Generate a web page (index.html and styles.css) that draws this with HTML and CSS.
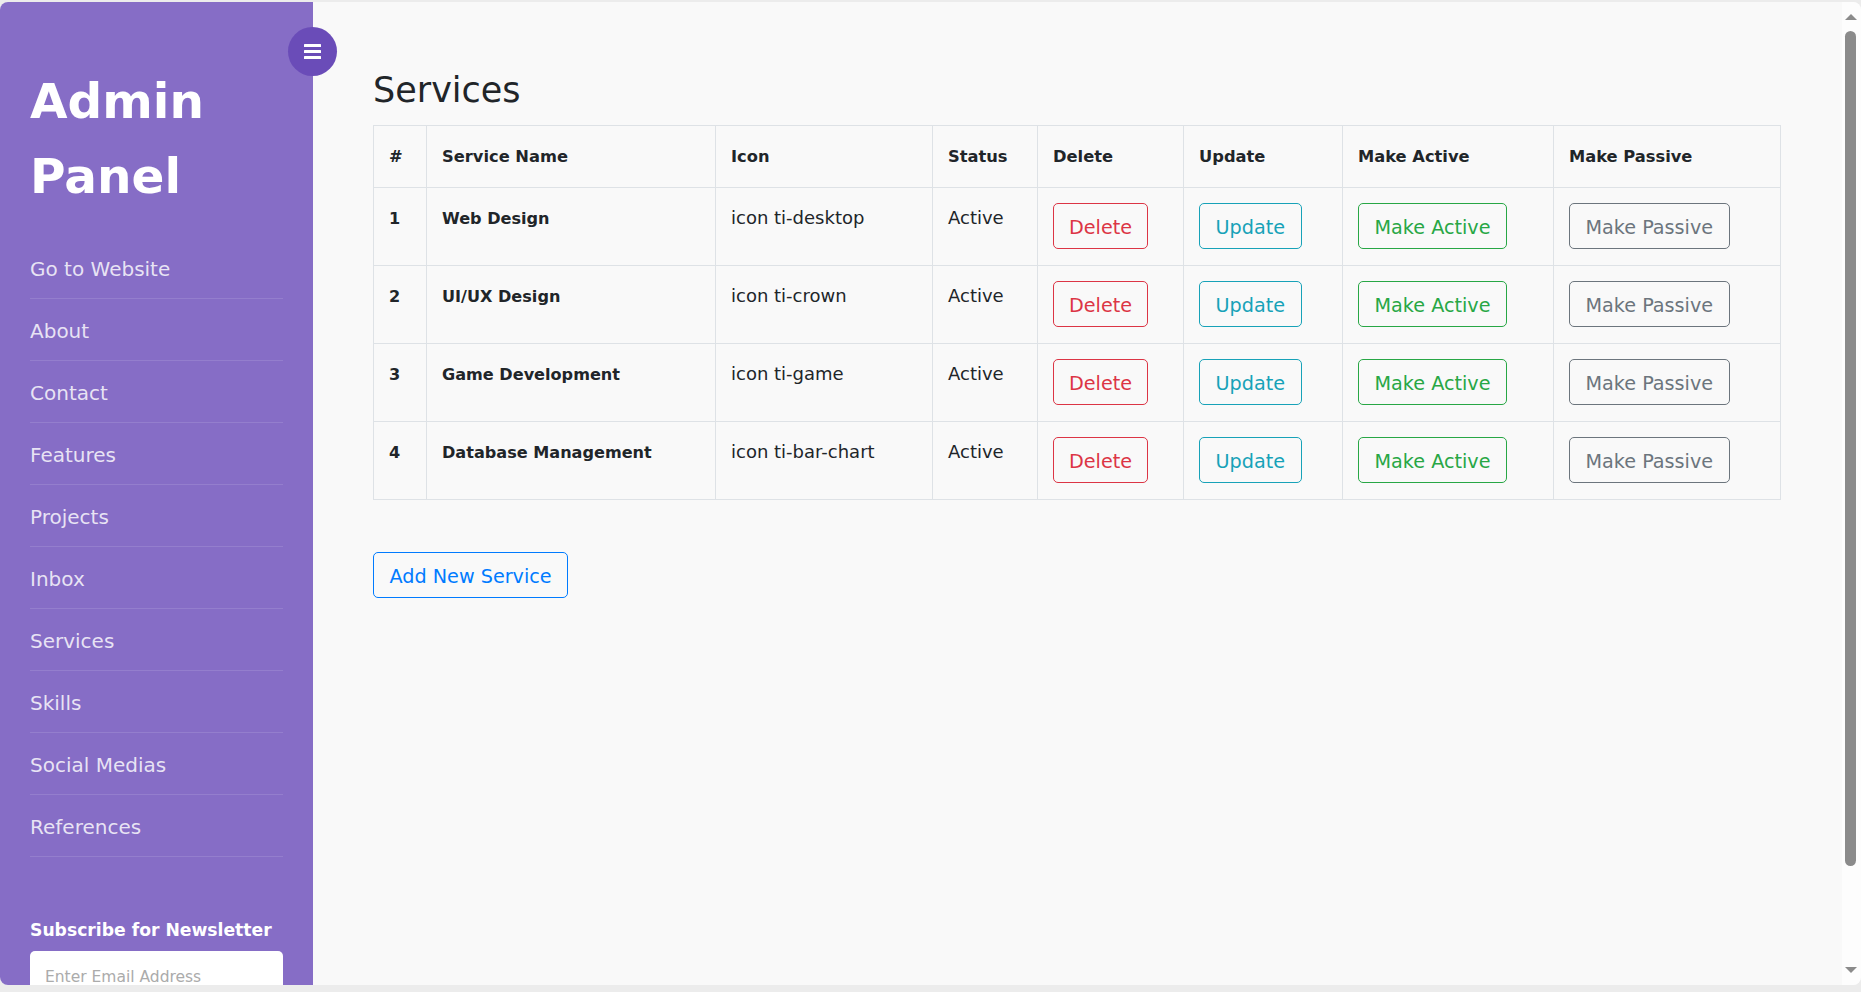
FILE: index.html
```html
<!DOCTYPE html>
<html lang="en">
<head>
<meta charset="utf-8">
<title>Admin Panel - Services</title>
<link rel="stylesheet" href="styles.css">
</head>
<body>
<div class="frame">
  <aside class="sidebar">
    <h1 class="brand">Admin Panel</h1>
    <nav class="nav">
      <a href="#">Go to Website</a>
      <a href="#">About</a>
      <a href="#">Contact</a>
      <a href="#">Features</a>
      <a href="#">Projects</a>
      <a href="#">Inbox</a>
      <a href="#">Services</a>
      <a href="#">Skills</a>
      <a href="#">Social Medias</a>
      <a href="#">References</a>
    </nav>
    <div class="newsletter">
      <h3>Subscribe for Newsletter</h3>
      <input type="email" placeholder="Enter Email Address">
    </div>
  </aside>

  <button class="toggle" type="button" aria-label="Toggle menu">
    <svg width="17" height="15" viewBox="0 0 17 15"><rect x="0" y="0" width="17" height="3" rx="0.5" fill="#fff"/><rect x="0" y="6" width="17" height="3" rx="0.5" fill="#fff"/><rect x="0" y="12" width="17" height="3" rx="0.5" fill="#fff"/></svg>
  </button>

  <main class="content">
    <h2 class="page-title">Services</h2>
    <table class="services">
      <colgroup>
        <col class="c-num"><col class="c-name"><col class="c-icon"><col class="c-status">
        <col class="c-del"><col class="c-upd"><col class="c-act"><col class="c-pas">
      </colgroup>
      <thead>
        <tr>
          <th>#</th><th>Service Name</th><th>Icon</th><th>Status</th>
          <th>Delete</th><th>Update</th><th>Make Active</th><th>Make Passive</th>
        </tr>
      </thead>
      <tbody>
        <tr>
          <td class="bold">1</td><td class="bold">Web Design</td><td>icon ti-desktop</td><td>Active</td>
          <td><a class="btn btn-danger" href="#">Delete</a></td>
          <td><a class="btn btn-info" href="#">Update</a></td>
          <td><a class="btn btn-success" href="#">Make Active</a></td>
          <td><a class="btn btn-secondary" href="#">Make Passive</a></td>
        </tr>
        <tr>
          <td class="bold">2</td><td class="bold">UI/UX Design</td><td>icon ti-crown</td><td>Active</td>
          <td><a class="btn btn-danger" href="#">Delete</a></td>
          <td><a class="btn btn-info" href="#">Update</a></td>
          <td><a class="btn btn-success" href="#">Make Active</a></td>
          <td><a class="btn btn-secondary" href="#">Make Passive</a></td>
        </tr>
        <tr>
          <td class="bold">3</td><td class="bold">Game Development</td><td>icon ti-game</td><td>Active</td>
          <td><a class="btn btn-danger" href="#">Delete</a></td>
          <td><a class="btn btn-info" href="#">Update</a></td>
          <td><a class="btn btn-success" href="#">Make Active</a></td>
          <td><a class="btn btn-secondary" href="#">Make Passive</a></td>
        </tr>
        <tr>
          <td class="bold">4</td><td class="bold">Database Management</td><td>icon ti-bar-chart</td><td>Active</td>
          <td><a class="btn btn-danger" href="#">Delete</a></td>
          <td><a class="btn btn-info" href="#">Update</a></td>
          <td><a class="btn btn-success" href="#">Make Active</a></td>
          <td><a class="btn btn-secondary" href="#">Make Passive</a></td>
        </tr>
      </tbody>
    </table>
    <div class="actions">
      <a class="btn btn-primary" href="#">Add New Service</a>
    </div>
  </main>

  <div class="scrollbar" aria-hidden="true">
    <span class="arrow-up"></span>
    <span class="thumb"></span>
    <span class="spacer"></span>
    <span class="arrow-down"></span>
  </div>
</div>
</body>
</html>
```

FILE: styles.css
```css
* {
  box-sizing: border-box;
}

html, body {
  margin: 0;
  padding: 0;
}

body {
  background: #ececec;
  font-family: "DejaVu Sans", "Liberation Sans", sans-serif;
  color: #212529;
  height: 992px;
  overflow: hidden;
  padding-top: 2px;
}

.frame {
  position: relative;
  display: flex;
  height: 983px;
  border-radius: 8px;
  overflow: hidden;
  background: #f9f9f9;
}

/* Sidebar */
.sidebar {
  flex: 0 0 313px;
  width: 313px;
  background: #866dc6;
  padding: 62px 30px 0;
  overflow: hidden;
}

.brand {
  margin: 0;
  color: #ffffff;
  font-size: 48.5px;
  font-weight: 700;
  line-height: 75px;
}

.nav {
  margin-top: 23px;
  display: flex;
  flex-direction: column;
}

.nav a {
  display: block;
  padding: 18px 0 14px;
  font-size: 20px;
  line-height: 29px;
  color: rgba(255, 255, 255, 0.82);
  text-decoration: none;
  border-bottom: 1px solid rgba(255, 255, 255, 0.12);
}

.newsletter {
  margin-top: 60px;
}

.newsletter h3 {
  margin: 0 0 7px;
  color: #ffffff;
  font-size: 17.2px;
  font-weight: 700;
  line-height: 27px;
  white-space: nowrap;
}

.newsletter input {
  display: block;
  width: 100%;
  height: 52px;
  border: none;
  border-radius: 5px;
  background: #ffffff;
  padding: 0 15px;
  font-family: inherit;
  font-size: 15.5px;
  color: #333;
  outline: none;
}

.newsletter input::placeholder {
  color: #ababab;
}

/* Toggle button (overlaps sidebar edge) */
.toggle {
  position: absolute;
  left: 288px;
  top: 25px;
  width: 49px;
  height: 49px;
  border: none;
  border-radius: 50%;
  background: #6a4cb8;
  display: flex;
  align-items: center;
  justify-content: center;
  padding: 0;
  cursor: pointer;
}

.toggle svg {
  display: block;
}

/* Main content */
.content {
  flex: 1 1 auto;
  padding: 67px 62px 0 60px;
  min-width: 0;
}

.page-title {
  margin: 0 0 14px;
  font-size: 35px;
  font-weight: 400;
  line-height: 42px;
  color: #212529;
}

.services {
  width: 100%;
  table-layout: fixed;
  border-collapse: collapse;
  border: 1px solid #dee2e6;
}

.c-num { width: 53px; }
.c-name { width: 289px; }
.c-icon { width: 217px; }
.c-status { width: 105px; }
.c-del { width: 146px; }
.c-upd { width: 159px; }
.c-act { width: 211px; }
.c-pas { width: 227px; }

.services th,
.services td {
  border: 1px solid #dee2e6;
  text-align: left;
}

.services th {
  padding: 19px 15px 18px;
  font-size: 16.3px;
  font-weight: 700;
  line-height: 24px;
  vertical-align: middle;
  white-space: nowrap;
}

.services td {
  padding: 15px 15px 16px;
  font-size: 18px;
  line-height: 30px;
  vertical-align: top;
  white-space: nowrap;
}

.services td.bold {
  font-size: 16.1px;
  font-weight: 700;
  line-height: 31px;
}

/* Buttons (outline style) */
.btn {
  display: inline-block;
  vertical-align: top;
  height: 46px;
  padding: 3px 15.5px 0;
  border: 1px solid currentColor;
  border-radius: 5px;
  font-size: 19.2px;
  line-height: 41px;
  text-decoration: none;
  background: transparent;
  white-space: nowrap;
}

.btn-danger { color: #dc3545; padding-left: 15px; padding-right: 15px; }
.btn-info { color: #17a2b8; }
.btn-success { color: #28a745; }
.btn-secondary { color: #6c757d; }
.btn-primary { color: #007bff; }

.actions {
  margin-top: 52px;
}

/* Window scrollbar strip */
.scrollbar {
  flex: 0 0 19px;
  display: flex;
  flex-direction: column;
  align-items: flex-start;
  padding: 12px 0 12px 3px;
  background: #fdfdfd;
}

.arrow-up {
  width: 0;
  height: 0;
  border-left: 6px solid transparent;
  border-right: 6px solid transparent;
  border-bottom: 6px solid #8b8b8b;
}

.thumb {
  margin-top: 11px;
  width: 11px;
  height: 835px;
  border-radius: 6px;
  background: #8b8b8b;
}

.spacer {
  flex: 1 1 auto;
}

.arrow-down {
  width: 0;
  height: 0;
  border-left: 6px solid transparent;
  border-right: 6px solid transparent;
  border-top: 6px solid #8b8b8b;
}
```
